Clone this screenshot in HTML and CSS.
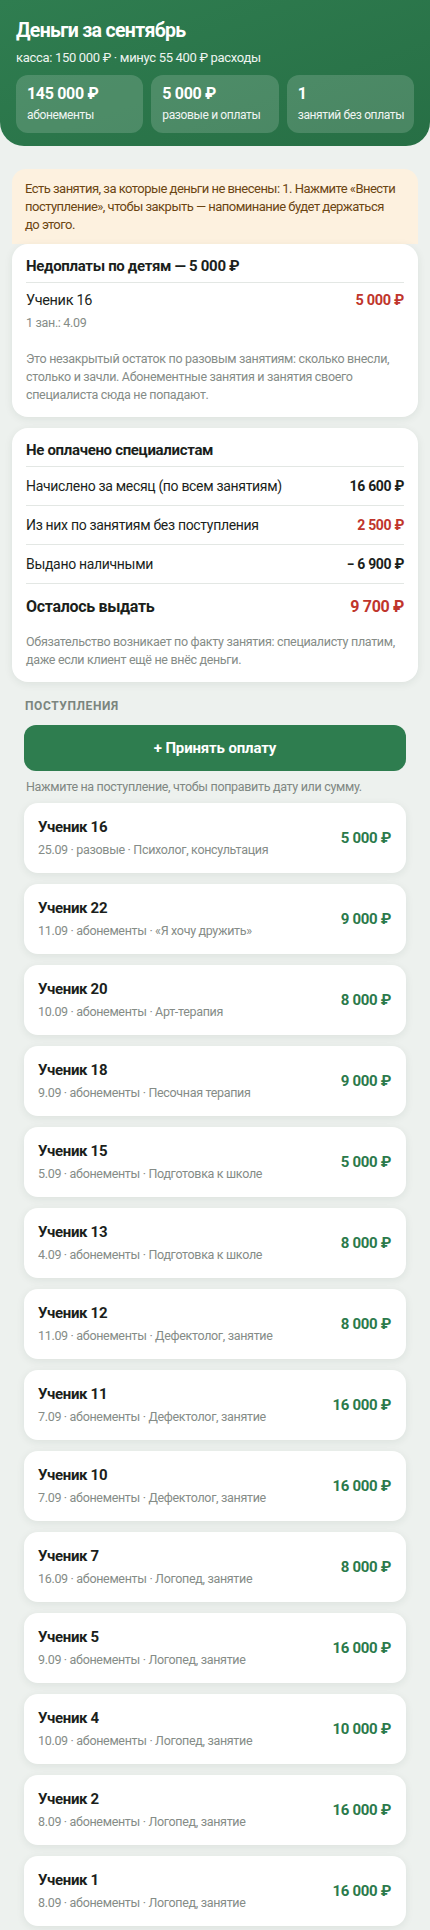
FILE: index.html
```html
<!DOCTYPE html>
<html lang="ru">
<head>
<meta charset="utf-8">
<title>Деньги за сентябрь</title>
<link rel="stylesheet" href="styles.css">
</head>
<body>
<header class="hero">
  <h1 class="hero-title">Деньги за сентябрь</h1>
  <div class="hero-sub">касса: 150 000 ₽ · минус 55 400 ₽ расходы</div>
  <div class="stats">
    <div class="stat"><div class="stat-val">145 000 ₽</div><div class="stat-lbl">абонементы</div></div>
    <div class="stat"><div class="stat-val">5 000 ₽</div><div class="stat-lbl">разовые и оплаты</div></div>
    <div class="stat"><div class="stat-val">1</div><div class="stat-lbl">занятий без оплаты</div></div>
  </div>
</header>

<main class="main">
  <div class="alert">Есть занятия, за которые деньги не внесены: 1. Нажмите «Внести поступление», чтобы закрыть — напоминание будет держаться до&nbsp;этого.</div>

  <section class="card">
    <h2 class="card-title">Недоплаты по детям — 5 000 ₽</h2>
    <div class="debt">
      <div class="debt-row"><span class="debt-name">Ученик 16</span><span class="amt red">5 000 ₽</span></div>
      <div class="debt-meta">1 зан.: 4.09</div>
    </div>
    <p class="note">Это незакрытый остаток по разовым занятиям: сколько внесли, столько и зачли. Абонементные занятия и занятия своего специалиста сюда не попадают.</p>
  </section>

  <section class="card">
    <h2 class="card-title">Не оплачено специалистам</h2>
    <div class="line"><span>Начислено за месяц (по всем занятиям)</span><span class="amt">16 600 ₽</span></div>
    <div class="line"><span>Из них по занятиям без поступления</span><span class="amt red">2 500 ₽</span></div>
    <div class="line"><span>Выдано наличными</span><span class="amt">− 6 900 ₽</span></div>
    <div class="line total"><span>Осталось выдать</span><span class="amt red">9 700 ₽</span></div>
    <p class="note">Обязательство возникает по факту занятия: специалисту платим, даже если клиент ещё не внёс деньги.</p>
  </section>

  <section class="payments">
    <div class="sec-title">Поступления</div>
    <button class="btn">+ Принять оплату</button>
    <div class="hint">Нажмите на поступление, чтобы поправить дату или сумму.</div>
    <div class="pay-list">
      <div class="pay"><div class="pay-info"><div class="pay-name">Ученик 16</div><div class="pay-meta">25.09 · разовые · Психолог, консультация</div></div><div class="pay-amt">5 000 ₽</div></div>
      <div class="pay"><div class="pay-info"><div class="pay-name">Ученик 22</div><div class="pay-meta">11.09 · абонементы · «Я хочу дружить»</div></div><div class="pay-amt">9 000 ₽</div></div>
      <div class="pay"><div class="pay-info"><div class="pay-name">Ученик 20</div><div class="pay-meta">10.09 · абонементы · Арт-терапия</div></div><div class="pay-amt">8 000 ₽</div></div>
      <div class="pay"><div class="pay-info"><div class="pay-name">Ученик 18</div><div class="pay-meta">9.09 · абонементы · Песочная терапия</div></div><div class="pay-amt">9 000 ₽</div></div>
      <div class="pay"><div class="pay-info"><div class="pay-name">Ученик 15</div><div class="pay-meta">5.09 · абонементы · Подготовка к школе</div></div><div class="pay-amt">5 000 ₽</div></div>
      <div class="pay"><div class="pay-info"><div class="pay-name">Ученик 13</div><div class="pay-meta">4.09 · абонементы · Подготовка к школе</div></div><div class="pay-amt">8 000 ₽</div></div>
      <div class="pay"><div class="pay-info"><div class="pay-name">Ученик 12</div><div class="pay-meta">11.09 · абонементы · Дефектолог, занятие</div></div><div class="pay-amt">8 000 ₽</div></div>
      <div class="pay"><div class="pay-info"><div class="pay-name">Ученик 11</div><div class="pay-meta">7.09 · абонементы · Дефектолог, занятие</div></div><div class="pay-amt">16 000 ₽</div></div>
      <div class="pay"><div class="pay-info"><div class="pay-name">Ученик 10</div><div class="pay-meta">7.09 · абонементы · Дефектолог, занятие</div></div><div class="pay-amt">16 000 ₽</div></div>
      <div class="pay"><div class="pay-info"><div class="pay-name">Ученик 7</div><div class="pay-meta">16.09 · абонементы · Логопед, занятие</div></div><div class="pay-amt">8 000 ₽</div></div>
      <div class="pay"><div class="pay-info"><div class="pay-name">Ученик 5</div><div class="pay-meta">9.09 · абонементы · Логопед, занятие</div></div><div class="pay-amt">16 000 ₽</div></div>
      <div class="pay"><div class="pay-info"><div class="pay-name">Ученик 4</div><div class="pay-meta">10.09 · абонементы · Логопед, занятие</div></div><div class="pay-amt">10 000 ₽</div></div>
      <div class="pay"><div class="pay-info"><div class="pay-name">Ученик 2</div><div class="pay-meta">8.09 · абонементы · Логопед, занятие</div></div><div class="pay-amt">16 000 ₽</div></div>
      <div class="pay"><div class="pay-info"><div class="pay-name">Ученик 1</div><div class="pay-meta">8.09 · абонементы · Логопед, занятие</div></div><div class="pay-amt">16 000 ₽</div></div>
    </div>
  </section>
</main>
</body>
</html>
```

FILE: styles.css
```css
* { box-sizing: border-box; }
html, body { margin: 0; padding: 0; }
body {
  background: #edf1ee;
  font-family: Roboto, "Noto Sans", sans-serif;
  color: #1b1f1c;
  width: 430px;
  letter-spacing: -0.02em;
}
.hero {
  background: linear-gradient(160deg, #2f7d50 0%, #276f45 100%);
  color: #fff;
  padding: 18px 16px 13px;
  border-radius: 0 0 24px 24px;
}
.hero-title {
  margin: 0;
  font-size: 19.5px;
  font-weight: 700;
  line-height: 26px;
  letter-spacing: -0.035em;
}
.hero-sub {
  margin-top: 5px;
  font-size: 13px;
  line-height: 17px;
  opacity: 0.92;
}
.stats {
  display: grid;
  grid-template-columns: 1fr 1fr 1fr;
  gap: 8px;
  margin-top: 9px;
}
.stat {
  background: rgba(255, 255, 255, 0.16);
  border-radius: 12px;
  padding: 9px 6px 8px 11px;
  height: 58px;
}
.stat-val {
  font-size: 16px;
  font-weight: 700;
  line-height: 20px;
}
.stat-lbl {
  font-size: 12px;
  line-height: 16px;
  margin-top: 3px;
  opacity: 0.92;
  letter-spacing: -0.03em;
  white-space: nowrap;
}
.main {
  padding: 23px 12px 8px;
}
.alert {
  background: #fdf1df;
  color: #6b4512;
  font-size: 13px;
  line-height: 18px;
  padding: 11px 14px 10px 13px;
  border-radius: 14px 14px 0 0;
  letter-spacing: -0.04em;
}
.card {
  background: #fff;
  border-radius: 16px;
  padding: 12px 14px 13px;
  box-shadow: 0 2px 8px rgba(30, 50, 35, 0.08);
  margin-bottom: 11px;
}
.card-title {
  margin: 0;
  font-size: 15px;
  font-weight: 700;
  line-height: 20px;
  padding-bottom: 6px;
  border-bottom: 1px solid #e3e7e4;
}
.debt { padding-top: 8px; }
.debt-row {
  display: flex;
  justify-content: space-between;
  align-items: baseline;
  font-size: 14.5px;
  line-height: 20px;
}
.debt-meta {
  font-size: 12.5px;
  color: #858c87;
  line-height: 18px;
  margin-top: 3px;
}
.amt { font-weight: 700; white-space: nowrap; }
.red { color: #c0352c; }
.note {
  margin: 18px 0 0;
  font-size: 12.5px;
  line-height: 18px;
  color: #858c87;
}
.line {
  display: flex;
  justify-content: space-between;
  align-items: center;
  font-size: 14px;
  height: 39px;
  border-bottom: 1px solid #e3e7e4;
}
.line.total {
  border-bottom: none;
  font-size: 16px;
  font-weight: 700;
  height: 45px;
}
.line + .note { margin-top: 4px; }
.payments { padding: 5px 12px 0; }
.sec-title {
  font-size: 12px;
  font-weight: 700;
  color: #7b857e;
  text-transform: uppercase;
  letter-spacing: 0.6px;
  line-height: 16px;
  padding-left: 1px;
}
.btn {
  display: block;
  width: 100%;
  margin-top: 11px;
  height: 46px;
  border: none;
  border-radius: 12px;
  background: #2e7d4f;
  color: #fff;
  font-family: inherit;
  font-size: 15px;
  font-weight: 700;
  letter-spacing: -0.01em;
}
.hint {
  font-size: 12.5px;
  color: #7f8782;
  line-height: 18px;
  margin-top: 7px;
  padding-left: 2px;
}
.pay-list {
  display: flex;
  flex-direction: column;
  gap: 11px;
  margin-top: 7px;
}
.pay {
  background: #fff;
  border-radius: 14px;
  height: 70px;
  padding: 0 15px 0 14px;
  display: flex;
  align-items: center;
  justify-content: space-between;
  box-shadow: 0 2px 8px rgba(30, 50, 35, 0.08);
}
.pay-name {
  font-size: 15px;
  font-weight: 700;
  line-height: 20px;
}
.pay-meta {
  font-size: 12.5px;
  color: #858c87;
  line-height: 18px;
  margin-top: 4px;
}
.pay-amt {
  font-size: 15px;
  font-weight: 700;
  color: #2b7a4b;
  white-space: nowrap;
}
```
